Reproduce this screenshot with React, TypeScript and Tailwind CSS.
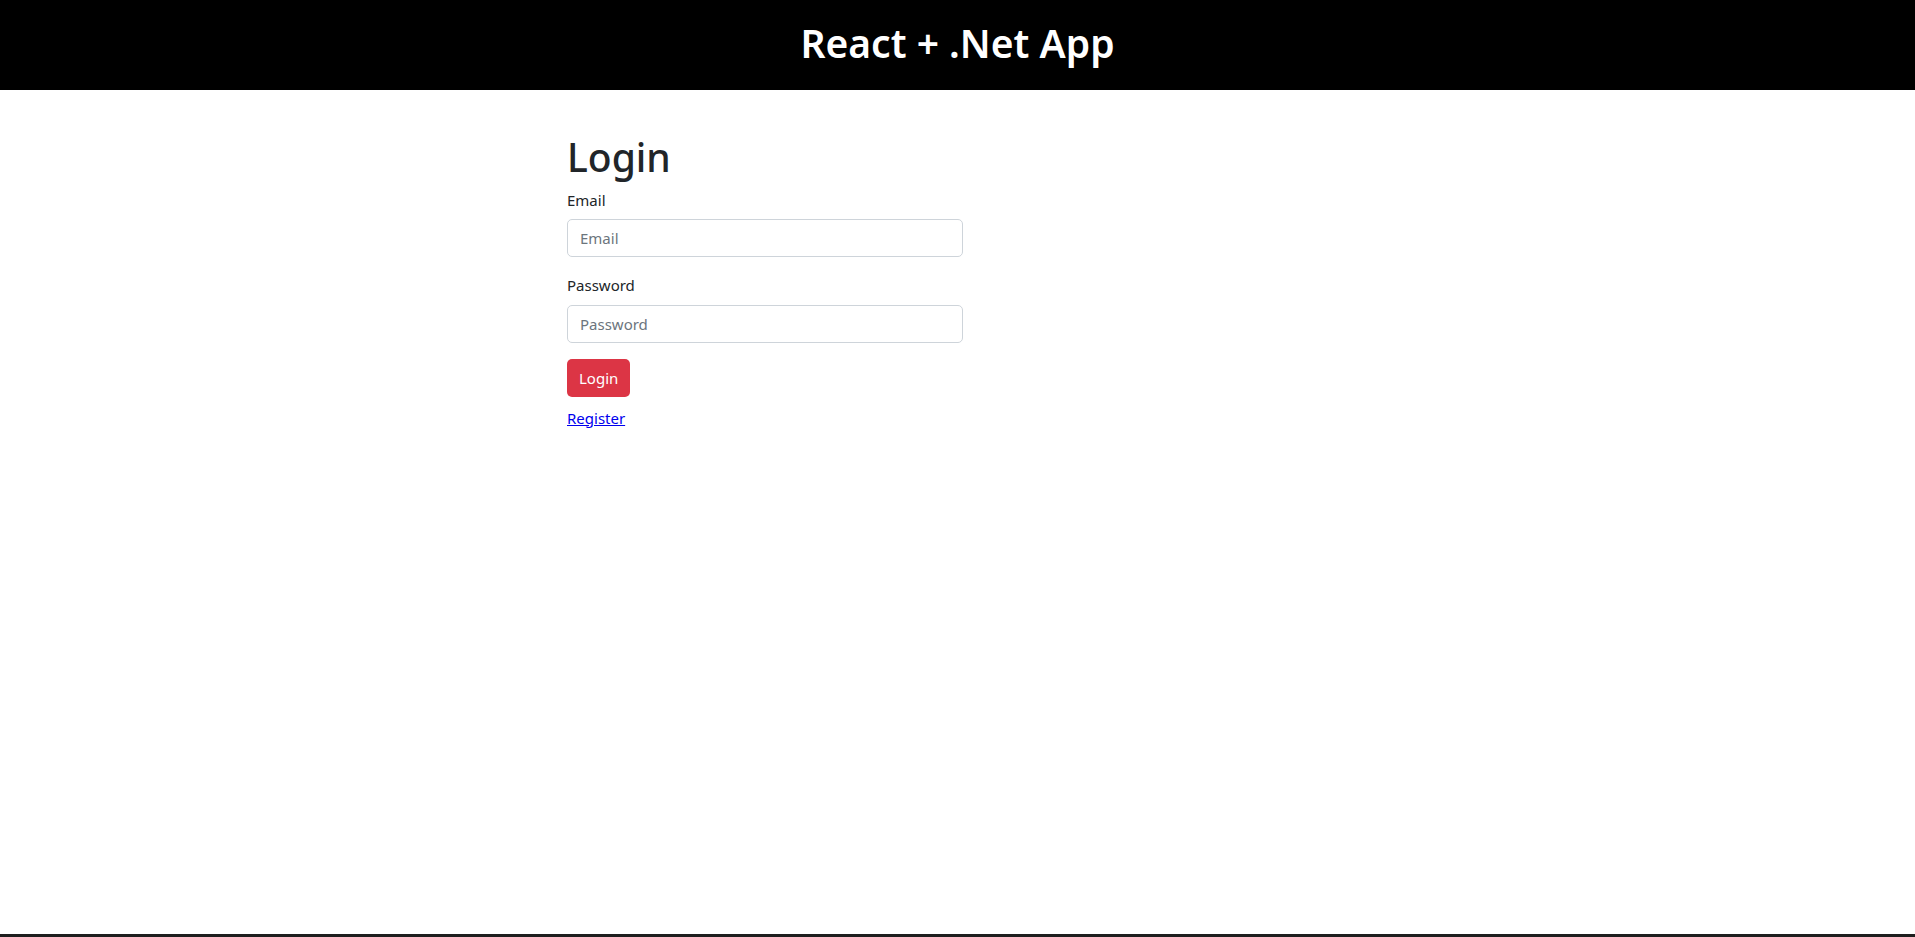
export default function App() {
  return (
    <div className="flex min-h-[937px] flex-col bg-white font-['Noto_Sans',sans-serif] text-[#212529]">
      <header className="flex h-[90px] items-center justify-center bg-black pb-[4px]">
        <h1 className="text-[39px] font-semibold leading-[1.2] text-white">React + .Net App</h1>
      </header>

      <main className="flex-1 pl-[567px] pt-[44px]">
        <div className="w-[396px]">
          <h2 className="mb-[8px] text-[39px] font-medium leading-[1.2]">Login</h2>

          <form className="flex flex-col" onSubmit={(e) => e.preventDefault()}>
            <label htmlFor="email" className="mb-2 text-[15px] leading-[1.5]">
              Email
            </label>
            <input
              id="email"
              type="email"
              placeholder="Email"
              className="mb-[17px] h-[38px] rounded-[5px] border border-[#ced4da] px-3 text-[15px] outline-none placeholder:text-[#6c757d]"
            />

            <label htmlFor="password" className="mb-2 text-[15px] leading-[1.5]">
              Password
            </label>
            <input
              id="password"
              type="password"
              placeholder="Password"
              className="mb-4 h-[38px] rounded-[5px] border border-[#ced4da] px-3 text-[15px] outline-none placeholder:text-[#6c757d]"
            />

            <div>
              <button
                type="submit"
                className="h-[38px] rounded-[5px] bg-[#dc3545] px-3 text-[15px] text-white"
              >
                Login
              </button>
            </div>
          </form>

          <a href="#" className="mt-[10px] inline-block text-[15px] leading-[1.5] text-[#0000ee] underline">
            Register
          </a>
        </div>
      </main>

      <div className="h-[3px] bg-[#1e1e1e]" />
    </div>
  );
}
